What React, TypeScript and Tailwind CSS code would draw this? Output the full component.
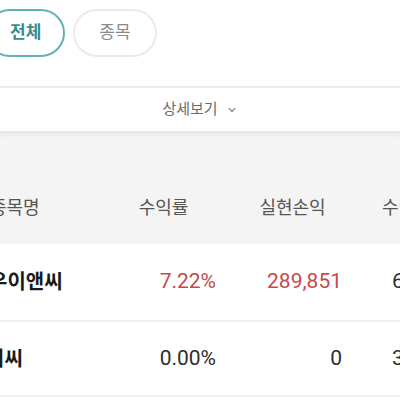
import { ChevronDown } from 'lucide-react'

const rows = [
  { name: '우이앤씨', offset: 'ml-[-11px]', rate: '7.22%', pnl: '289,851', qty: '60', up: true },
  { name: '비씨', offset: 'ml-[-14px]', rate: '0.00%', pnl: '0', qty: '3,9', up: false },
]

export default function App() {
  return (
    <div
      className="w-[400px] h-[400px] overflow-hidden bg-white"
      style={{ fontFamily: 'Roboto, "Noto Sans CJK KR", sans-serif' }}
    >
      {/* filter pills */}
      <div className="h-[86px] pt-[9px]">
        <div className="flex gap-2 ml-[-14px]">
          <button className="h-[48px] px-[22px] rounded-full border-2 border-[#63b2b4] text-[17px] font-bold text-[#3a8b8f] whitespace-nowrap">
            전체
          </button>
          <button className="h-[48px] px-6 rounded-full border-2 border-[#ebebeb] text-[17px] text-[#8a8a8a] whitespace-nowrap">
            종목
          </button>
        </div>
      </div>
      <div className="h-[2px] bg-[#ececec]" />

      {/* detail toggle */}
      <div className="h-[43px] flex items-center justify-center gap-[8px] text-[15px] text-[#6b6b6b]">
        <span>상세보기</span>
        <ChevronDown size={12} strokeWidth={2.2} className="text-[#8a8a8a]" />
      </div>

      {/* table header */}
      <div className="h-[113px] bg-[#f4f4f4] shadow-[inset_0_7px_6px_-5px_rgba(0,0,0,0.09)] flex flex-col justify-end">
        <div className="h-[73px] flex items-center text-[18px] text-[#555555] whitespace-nowrap">
          <div className="w-[111px] shrink-0">
            <span className="ml-[-10px]">종목명</span>
          </div>
          <div className="w-[105px] shrink-0 text-center">수익률</div>
          <div className="w-[126px] shrink-0 pl-[27px] text-center">실현손익</div>
          <div className="pl-[40px] shrink-0">수량</div>
        </div>
      </div>

      {/* rows */}
      {rows.map((r, i) => (
        <div
          key={r.name}
          className={`${i === 0 ? 'h-[78px]' : 'h-[75px]'} flex items-center border-b-2 border-[#efefef] whitespace-nowrap text-[21px]`}
        >
          <div className="w-[111px] shrink-0">
            <span className={`block ${r.offset} text-[20px] font-bold text-[#1a1a1a]`}>{r.name}</span>
          </div>
          <div className={`w-[105px] shrink-0 text-right ${r.up ? 'text-[#c64a48]' : 'text-[#2e2e2e]'}`}>
            {r.rate}
          </div>
          <div className={`w-[126px] shrink-0 text-right ${r.up ? 'text-[#c64a48]' : 'text-[#2e2e2e]'}`}>
            {r.pnl}
          </div>
          <div className="pl-[50px] shrink-0 text-[#2e2e2e]">{r.qty}</div>
        </div>
      ))}
    </div>
  )
}
